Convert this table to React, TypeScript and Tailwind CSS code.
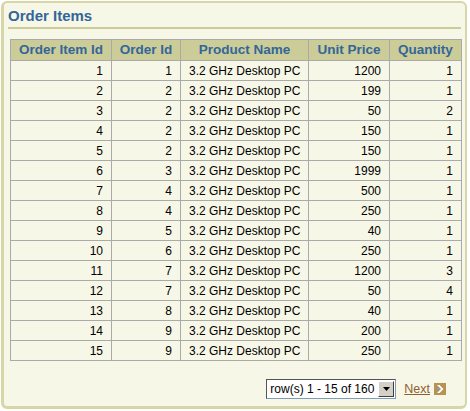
const ROWS: [number, number, string, number, number][] = [
  [1, 1, "3.2 GHz Desktop PC", 1200, 1],
  [2, 2, "3.2 GHz Desktop PC", 199, 1],
  [3, 2, "3.2 GHz Desktop PC", 50, 2],
  [4, 2, "3.2 GHz Desktop PC", 150, 1],
  [5, 2, "3.2 GHz Desktop PC", 150, 1],
  [6, 3, "3.2 GHz Desktop PC", 1999, 1],
  [7, 4, "3.2 GHz Desktop PC", 500, 1],
  [8, 4, "3.2 GHz Desktop PC", 250, 1],
  [9, 5, "3.2 GHz Desktop PC", 40, 1],
  [10, 6, "3.2 GHz Desktop PC", 250, 1],
  [11, 7, "3.2 GHz Desktop PC", 1200, 3],
  [12, 7, "3.2 GHz Desktop PC", 50, 4],
  [13, 8, "3.2 GHz Desktop PC", 40, 1],
  [14, 9, "3.2 GHz Desktop PC", 200, 1],
  [15, 9, "3.2 GHz Desktop PC", 250, 1],
];

const th = "border border-[#aaaaaa] px-1 h-[21px] text-[13.5px] font-bold text-[#336699] text-center whitespace-nowrap";
const td = "border border-[#aaaaaa] px-[8px] h-[20px] text-[12px] text-black whitespace-nowrap";

export default function App() {
  return (
    <div className="w-[470px] h-[411px] bg-white p-[1px]" style={{ fontFamily: '"Liberation Sans", Arial, sans-serif' }}>
      <div className="w-[466px] h-[408px] bg-[#f7f7e7] border-2 border-[#d6d6a8] border-b-[3px] border-l-[3px] rounded-[6px] flex flex-col">
        <div className="px-[4px] pt-[5px]">
          <div className="text-[15px] font-bold text-[#336699] leading-[16px] pb-[3px] border-b-2 border-[#cccc99]">Order Items</div>
        </div>
        <div className="pl-[6px] pt-[10px]">
          <table className="border-collapse w-[451px] table-fixed">
            <colgroup>
              <col className="w-[101px]" />
              <col className="w-[69px]" />
              <col className="w-[128px]" />
              <col className="w-[81px]" />
              <col className="w-[72px]" />
            </colgroup>
            <thead>
              <tr className="bg-[#cccc99]">
                <th className={th}>Order Item Id</th>
                <th className={th}>Order Id</th>
                <th className={th}>Product Name</th>
                <th className={th}>Unit Price</th>
                <th className={th}>Quantity</th>
              </tr>
            </thead>
            <tbody>
              {ROWS.map((r) => (
                <tr key={r[0]}>
                  <td className={`${td} text-right`}>{r[0]}</td>
                  <td className={`${td} text-right`}>{r[1]}</td>
                  <td className={`${td} text-left`}>{r[2]}</td>
                  <td className={`${td} text-right`}>{r[3]}</td>
                  <td className={`${td} text-right`}>{r[4]}</td>
                </tr>
              ))}
            </tbody>
          </table>
        </div>
        <div className="flex items-center justify-end pr-[19px] pt-[18px]">
          <div className="flex items-center h-[20px] w-[130px] border border-[#7f9db9] bg-white border-t-[#555] border-l-[#555]">
            <span className="flex-1 pl-[3px] text-[12px] text-black leading-none whitespace-nowrap">row(s) 1 - 15 of 160</span>
            <span className="w-[16px] h-[16px] mr-[1px] bg-[#d4d0c8] border border-[#fff] border-r-[#404040] border-b-[#404040] flex items-center justify-center">
              <svg width="7" height="4" viewBox="0 0 7 4"><path d="M0 0h7L3.5 4z" fill="#000" /></svg>
            </span>
          </div>
          <a className="ml-[8px] text-[12.5px] text-[#8f5f2f] underline">Next</a>
          <span className="ml-[4px] w-[12px] h-[12px] bg-[#b8924f] flex items-center justify-center">
            <svg width="8" height="8" viewBox="0 0 8 8"><path d="M1 0l4 4-4 4h2.5l4-4-4-4z" fill="#fff" /><path d="M1 1l3 3-3 3" stroke="#6fa3d8" strokeWidth="1" fill="none" /></svg>
          </span>
        </div>
      </div>
    </div>
  );
}
